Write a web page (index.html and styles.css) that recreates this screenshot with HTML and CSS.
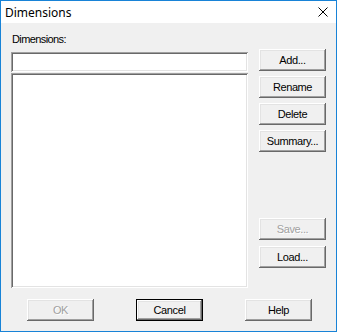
FILE: index.html
```html
<!DOCTYPE html>
<html lang="en">
<head>
    <meta charset="UTF-8">
    <meta name="viewport" content="width=device-width, initial-scale=1.0">
    <title>Dimensions</title>
    <link rel="stylesheet" href="styles.css">
</head>
<body>
<div class="window">
    <div class="titlebar">
        <span class="title">Dimensions</span>
        <svg class="close" width="10" height="10" viewBox="0 0 10 10">
            <path d="M0.5 0.5 L9.5 9.5 M9.5 0.5 L0.5 9.5" stroke="#000" stroke-width="1" fill="none"/>
        </svg>
    </div>
    <div class="client">
        <div class="main">
            <div class="left">
                <div class="label">Dimensions:</div>
                <input type="text" class="edit">
                <div class="listbox"></div>
            </div>
            <div class="right">
                <button class="btn">Add...</button>
                <button class="btn">Rename</button>
                <button class="btn">Delete</button>
                <button class="btn">Summary...</button>
                <button class="btn save" disabled>Save...</button>
                <button class="btn load">Load...</button>
            </div>
        </div>
        <div class="bottom">
            <button class="btn" disabled>OK</button>
            <button class="btn default">Cancel</button>
            <button class="btn">Help</button>
        </div>
    </div>
</div>
</body>
</html>
```

FILE: styles.css
```css
body {
    margin: 0;
    font-family: "Liberation Sans", Arial, sans-serif;
    font-size: 11px;
    color: #000;
}
.window {
    width: 337px;
    height: 332px;
    box-sizing: border-box;
    border: 1px solid #1883d7;
    background-color: #f0f0f0;
    display: flex;
    flex-direction: column;
}
.titlebar {
    height: 22px;
    background-color: #fff;
    display: flex;
    align-items: center;
    justify-content: space-between;
    padding: 0 8px 0 4px;
}
.title {
    font-family: "Noto Sans", "Open Sans", sans-serif;
    font-size: 12px;
}
.client {
    flex: 1;
    padding: 0 9px 0 10px;
}
.main {
    display: flex;
    gap: 11px;
}
.left {
    width: 237px;
    display: flex;
    flex-direction: column;
}
.label {
    margin-top: 10px;
    height: 13px;
    line-height: 13px;
    padding-left: 1px;
    letter-spacing: -0.6px;
}
.edit {
    margin: 6px 0 0 0;
    height: 20px;
    box-sizing: border-box;
    border: none;
    padding: 0;
    outline: none;
    background-color: #fff;
    box-shadow: inset 1px 1px #a0a0a0, inset -1px -1px #fff, inset 2px 2px #696969, inset -2px -2px #e3e3e3;
}
.listbox {
    margin-top: 1px;
    height: 215px;
    background-color: #fff;
    box-shadow: inset 1px 1px #a0a0a0, inset -1px -1px #fff, inset 2px 2px #696969, inset -2px -2px #e3e3e3;
}
.right {
    display: flex;
    flex-direction: column;
    gap: 5px;
    padding-top: 26px;
}
.btn {
    width: 67px;
    height: 22px;
    padding: 0;
    border: none;
    background-color: #f0f0f0;
    font-family: "Liberation Sans", Arial, sans-serif;
    font-size: 11px;
    letter-spacing: -0.4px;
    color: #000;
    box-shadow: inset -1px -1px #696969, inset 1px 1px #fff, inset -2px -2px #a0a0a0, inset 2px 2px #e3e3e3;
}
.btn:disabled {
    color: #a0a0a0;
    text-shadow: 1px 1px #fff;
}
.save {
    margin-top: 61px;
}
.load {
    margin-top: 1px;
}
.default {
    box-shadow: inset 0 0 0 1px #000, inset -2px -2px #696969, inset 2px 2px #fff, inset -3px -3px #a0a0a0, inset 3px 3px #e3e3e3;
}
.bottom {
    display: flex;
    gap: 42px;
    margin-top: 11px;
    padding-left: 16px;
}
```
